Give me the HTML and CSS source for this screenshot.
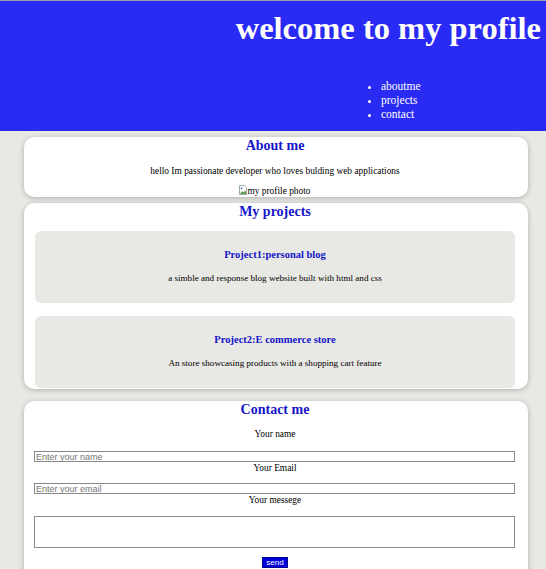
FILE: index.html
```html
<!DOCTYPE html>
<html>
<head>
<meta charset="utf-8">
<title>My profile</title>
<link rel="stylesheet" href="styles.css">
</head>
<body>
<header class="site-header">
  <h1 class="title">welcome to my profile</h1>
  <nav class="nav">
    <ul class="nav-list">
      <li><a href="#about">aboutme</a></li>
      <li><a href="#projects">projects</a></li>
      <li><a href="#contact">contact</a></li>
    </ul>
  </nav>
</header>
<main class="main">
  <section class="card card-about" id="about">
    <h2 class="card-title">About me</h2>
    <p class="about-text">hello Im passionate developer who loves bulding web applications</p>
    <div class="photo"><svg class="broken-img" width="8" height="10" viewBox="0 0 8 10"><path d="M0.5 0.5H5.5L7.5 2.5V9.5H0.5Z" fill="#fff" stroke="#9aa" stroke-width="1"/><path d="M1 9L3 6L4.5 7.5L6 5.5L7 7V9Z" fill="#5a9a4a"/><circle cx="2.5" cy="3.2" r="1" fill="#6a8ad0"/></svg>my profile photo</div>
  </section>
  <section class="card card-projects" id="projects">
    <h2 class="card-title">My projects</h2>
    <div class="project">
      <h3 class="project-title">Project1:personal blog</h3>
      <p class="project-text">a simble and response blog website built with html and css</p>
    </div>
    <div class="project project-second">
      <h3 class="project-title">Project2:E commerce store</h3>
      <p class="project-text">An store showcasing products with a shopping cart feature</p>
    </div>
  </section>
  <section class="card card-contact" id="contact">
    <h2 class="card-title">Contact me</h2>
    <form class="form">
      <label class="label label-first" for="name">Your name</label>
      <input class="field field-first" id="name" type="text" placeholder="Enter your name">
      <label class="label" for="email">Your Email</label>
      <input class="field" id="email" type="email" placeholder="Enter your email">
      <label class="label" for="msg">Your messege</label>
      <textarea class="area" id="msg"></textarea>
      <div class="btn-row"><button class="send" type="button">send</button></div>
    </form>
  </section>
</main>
</body>
</html>
```

FILE: styles.css
```css
html, body {
  margin: 0;
  padding: 0;
}
body {
  background: #e8e8e4;
  font-family: "Liberation Serif", "Times New Roman", serif;
  color: #000;
  border-top: 1px solid #9a9ab0;
}
.site-header {
  background: #2a2af5;
  color: #fff;
  padding: 9px 5px 10px 0;
}
.title {
  margin: 0;
  font-size: 32.5px;
  line-height: 36px;
  font-weight: bold;
  text-align: right;
}
.nav-list {
  margin: 33px 0 0 341px;
  padding: 0 0 0 40px;
  font-size: 11.5px;
  line-height: 14px;
}
.nav-list a {
  color: #fff;
  text-decoration: none;
}
.main {
  padding: 0 18px 0 24px;
}
.card {
  background: #fff;
  border-radius: 10px;
  box-shadow: 0 1px 5px rgba(0,0,0,0.25);
  padding: 0 13px 0 11px;
  text-align: center;
}
.card-about {
  margin-top: 6px;
  height: 60px;
}
.card-projects {
  margin-top: 6px;
  padding-bottom: 1px;
}
.card-contact {
  margin-top: 12px;
  height: 180px;
}
.card-title {
  margin: 0;
  font-size: 14px;
  line-height: 18px;
  color: #1515c8;
}
.about-text {
  margin: 10px 0 8px;
  font-size: 9.4px;
  line-height: 12px;
}
.photo {
  font-size: 9.4px;
  line-height: 12px;
}
.broken-img {
  vertical-align: -1px;
}
.card-projects .card-title {
  margin-bottom: 10px;
}
.project {
  background: #e8e8e4;
  border-radius: 6px;
  padding: 17px 0 19px;
}
.project-second {
  margin-top: 13px;
}
.project-title {
  margin: 0;
  font-size: 10.5px;
  line-height: 13px;
  color: #1515c8;
}
.project-text {
  margin: 11px 0 0;
  font-size: 9.1px;
  line-height: 12px;
}
.form {
  display: flex;
  flex-direction: column;
}
.label {
  font-size: 9.4px;
  line-height: 12px;
}
.label-first {
  margin-top: 9px;
}
.field {
  box-sizing: border-box;
  margin: 9px 0 0 -1px;
  height: 11px;
  padding: 0 1px;
  border: 1px solid #888;
  font-family: "Liberation Sans", Arial, sans-serif;
  font-size: 9px;
  line-height: 9px;
}
.field-first {
  margin-top: 11px;
}
.area {
  box-sizing: border-box;
  margin: 10px 0 0 -1px;
  height: 32px;
  border: 1px solid #888;
  resize: none;
}
.btn-row {
  margin-top: 9px;
  display: flex;
  justify-content: center;
}
.send {
  background: #0000dd;
  color: #fff;
  border: 1px solid #000088;
  height: 11px;
  padding: 0 3px;
  font-family: "Liberation Sans", Arial, sans-serif;
  font-size: 8px;
  line-height: 9px;
}
```
